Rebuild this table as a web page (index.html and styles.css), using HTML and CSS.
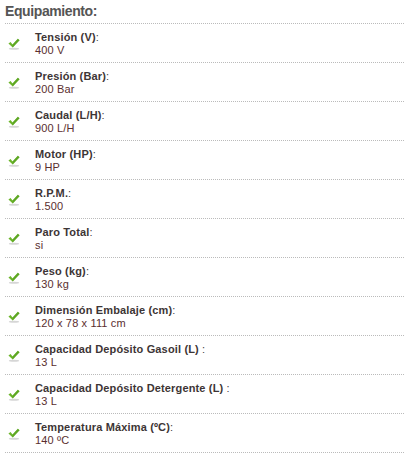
FILE: index.html
```html
<!DOCTYPE html>
<html>
<head>
<meta charset="utf-8">
<link rel="stylesheet" href="styles.css">
</head>
<body>
<div class="box">
  <h3 class="title">Equipamiento:</h3>
  <ul class="list">
    <li class="item"><span class="check"><svg viewBox="0 0 16 14" width="14" height="12"><ellipse cx="8" cy="12.6" rx="6" ry="1.2" fill="#d6d6d6"/><path d="M1.5 6.5 L4 4.8 L6.3 7.6 L12.5 1 L14.5 2.6 L6.5 11 Z" fill="#6cb52a"/><path d="M6.3 7.6 L12.5 1 L14.5 2.6 L6.5 11 Z" fill="#4f9a1c" opacity="0.5"/></svg></span><div class="txt"><span class="lab"><b>Tensión (V)</b>:</span><span class="val">400 V</span></div></li>
    <li class="item"><span class="check"><svg viewBox="0 0 16 14" width="14" height="12"><ellipse cx="8" cy="12.6" rx="6" ry="1.2" fill="#d6d6d6"/><path d="M1.5 6.5 L4 4.8 L6.3 7.6 L12.5 1 L14.5 2.6 L6.5 11 Z" fill="#6cb52a"/><path d="M6.3 7.6 L12.5 1 L14.5 2.6 L6.5 11 Z" fill="#4f9a1c" opacity="0.5"/></svg></span><div class="txt"><span class="lab"><b>Presión (Bar)</b>:</span><span class="val">200 Bar</span></div></li>
    <li class="item"><span class="check"><svg viewBox="0 0 16 14" width="14" height="12"><ellipse cx="8" cy="12.6" rx="6" ry="1.2" fill="#d6d6d6"/><path d="M1.5 6.5 L4 4.8 L6.3 7.6 L12.5 1 L14.5 2.6 L6.5 11 Z" fill="#6cb52a"/><path d="M6.3 7.6 L12.5 1 L14.5 2.6 L6.5 11 Z" fill="#4f9a1c" opacity="0.5"/></svg></span><div class="txt"><span class="lab"><b>Caudal (L/H)</b>:</span><span class="val">900 L/H</span></div></li>
    <li class="item"><span class="check"><svg viewBox="0 0 16 14" width="14" height="12"><ellipse cx="8" cy="12.6" rx="6" ry="1.2" fill="#d6d6d6"/><path d="M1.5 6.5 L4 4.8 L6.3 7.6 L12.5 1 L14.5 2.6 L6.5 11 Z" fill="#6cb52a"/><path d="M6.3 7.6 L12.5 1 L14.5 2.6 L6.5 11 Z" fill="#4f9a1c" opacity="0.5"/></svg></span><div class="txt"><span class="lab"><b>Motor (HP)</b>:</span><span class="val">9 HP</span></div></li>
    <li class="item"><span class="check"><svg viewBox="0 0 16 14" width="14" height="12"><ellipse cx="8" cy="12.6" rx="6" ry="1.2" fill="#d6d6d6"/><path d="M1.5 6.5 L4 4.8 L6.3 7.6 L12.5 1 L14.5 2.6 L6.5 11 Z" fill="#6cb52a"/><path d="M6.3 7.6 L12.5 1 L14.5 2.6 L6.5 11 Z" fill="#4f9a1c" opacity="0.5"/></svg></span><div class="txt"><span class="lab"><b>R.P.M.</b>:</span><span class="val">1.500</span></div></li>
    <li class="item"><span class="check"><svg viewBox="0 0 16 14" width="14" height="12"><ellipse cx="8" cy="12.6" rx="6" ry="1.2" fill="#d6d6d6"/><path d="M1.5 6.5 L4 4.8 L6.3 7.6 L12.5 1 L14.5 2.6 L6.5 11 Z" fill="#6cb52a"/><path d="M6.3 7.6 L12.5 1 L14.5 2.6 L6.5 11 Z" fill="#4f9a1c" opacity="0.5"/></svg></span><div class="txt"><span class="lab"><b>Paro Total</b>:</span><span class="val">si</span></div></li>
    <li class="item"><span class="check"><svg viewBox="0 0 16 14" width="14" height="12"><ellipse cx="8" cy="12.6" rx="6" ry="1.2" fill="#d6d6d6"/><path d="M1.5 6.5 L4 4.8 L6.3 7.6 L12.5 1 L14.5 2.6 L6.5 11 Z" fill="#6cb52a"/><path d="M6.3 7.6 L12.5 1 L14.5 2.6 L6.5 11 Z" fill="#4f9a1c" opacity="0.5"/></svg></span><div class="txt"><span class="lab"><b>Peso (kg)</b>:</span><span class="val">130 kg</span></div></li>
    <li class="item"><span class="check"><svg viewBox="0 0 16 14" width="14" height="12"><ellipse cx="8" cy="12.6" rx="6" ry="1.2" fill="#d6d6d6"/><path d="M1.5 6.5 L4 4.8 L6.3 7.6 L12.5 1 L14.5 2.6 L6.5 11 Z" fill="#6cb52a"/><path d="M6.3 7.6 L12.5 1 L14.5 2.6 L6.5 11 Z" fill="#4f9a1c" opacity="0.5"/></svg></span><div class="txt"><span class="lab"><b>Dimensión Embalaje (cm)</b>:</span><span class="val">120 x 78 x 111 cm</span></div></li>
    <li class="item"><span class="check"><svg viewBox="0 0 16 14" width="14" height="12"><ellipse cx="8" cy="12.6" rx="6" ry="1.2" fill="#d6d6d6"/><path d="M1.5 6.5 L4 4.8 L6.3 7.6 L12.5 1 L14.5 2.6 L6.5 11 Z" fill="#6cb52a"/><path d="M6.3 7.6 L12.5 1 L14.5 2.6 L6.5 11 Z" fill="#4f9a1c" opacity="0.5"/></svg></span><div class="txt"><span class="lab"><b>Capacidad Depósito Gasoil (L) </b>:</span><span class="val">13 L</span></div></li>
    <li class="item"><span class="check"><svg viewBox="0 0 16 14" width="14" height="12"><ellipse cx="8" cy="12.6" rx="6" ry="1.2" fill="#d6d6d6"/><path d="M1.5 6.5 L4 4.8 L6.3 7.6 L12.5 1 L14.5 2.6 L6.5 11 Z" fill="#6cb52a"/><path d="M6.3 7.6 L12.5 1 L14.5 2.6 L6.5 11 Z" fill="#4f9a1c" opacity="0.5"/></svg></span><div class="txt"><span class="lab"><b>Capacidad Depósito Detergente (L) </b>:</span><span class="val">13 L</span></div></li>
    <li class="item"><span class="check"><svg viewBox="0 0 16 14" width="14" height="12"><ellipse cx="8" cy="12.6" rx="6" ry="1.2" fill="#d6d6d6"/><path d="M1.5 6.5 L4 4.8 L6.3 7.6 L12.5 1 L14.5 2.6 L6.5 11 Z" fill="#6cb52a"/><path d="M6.3 7.6 L12.5 1 L14.5 2.6 L6.5 11 Z" fill="#4f9a1c" opacity="0.5"/></svg></span><div class="txt"><span class="lab"><b>Temperatura Máxima (ºC)</b>:</span><span class="val">140 ºC</span></div></li>
  </ul>
</div>
</body>
</html>
```

FILE: styles.css
```css
html, body {
  margin: 0;
  padding: 0;
  background: #fff;
}
body {
  font-family: "Liberation Sans", Arial, sans-serif;
  font-size: 11px;
  color: #4a3f3f;
}
.box {
  padding: 0 6px 0 5px;
}
.title {
  margin: 0;
  padding: 2px 0 0 0;
  height: 21px;
  font-size: 14px;
  line-height: 18px;
  font-weight: bold;
  letter-spacing: -0.4px;
  color: #555;
  border-bottom: 1px dotted #bbb;
}
.list {
  list-style: none;
  margin: 0;
  padding: 0;
}
.item {
  display: flex;
  align-items: center;
  height: 38px;
  border-bottom: 1px dotted #bbb;
}
.check {
  width: 28px;
  display: flex;
  align-items: center;
  padding-left: 2px;
  padding-top: 2px;
}
.check svg { display: block; }
.txt {
  display: flex;
  flex-direction: column;
  line-height: 13px;
  padding-top: 1px;
  letter-spacing: 0.15px;
}
.lab {
  color: #444;
}
.lab b {
  color: #3d3535;
}
.val {
  color: #5a2e2e;
}
```
